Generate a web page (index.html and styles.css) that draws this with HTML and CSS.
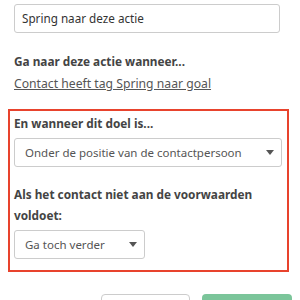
FILE: index.html
```html
<!DOCTYPE html>
<html lang="nl">
<head>
<meta charset="utf-8">
<link rel="stylesheet" href="styles.css">
</head>
<body>
<div class="page">
  <div class="name-input">Spring naar deze actie</div>
  <div class="section">
    <div class="label">Ga naar deze actie wanneer...</div>
    <a class="link" href="#">Contact heeft tag Spring naar goal</a>
  </div>
  <div class="highlight">
    <div class="label">En wanneer dit doel is...</div>
    <div class="select select-wide">
      <span>Onder de positie van de contactpersoon</span>
      <span class="caret"></span>
    </div>
    <div class="label label-second">Als het contact niet aan de voorwaarden voldoet:</div>
    <div class="select select-narrow">
      <span>Ga toch verder</span>
      <span class="caret"></span>
    </div>
  </div>
  <div class="actions">
    <div class="btn btn-cancel"></div>
    <div class="btn btn-save"></div>
  </div>
</div>
</body>
</html>
```

FILE: styles.css
```css
html, body {
  margin: 0;
  padding: 0;
  background: #fff;
}
body {
  font-family: "Noto Sans", "Open Sans", sans-serif;
  font-size: 12px;
  line-height: 21px;
  color: #444;
  overflow: hidden;
  height: 300px;
}
.page {
  padding: 4px 11px 0 8px;
}
.name-input {
  margin: 0 9px 0 6px;
  height: 29px;
  box-sizing: border-box;
  border: 1px solid #ccc;
  border-radius: 3px;
  padding: 0 7px;
  display: flex;
  align-items: center;
  color: #333;
  font-size: 11.7px;
}
.section {
  padding: 18px 6px 0;
  display: flex;
  flex-direction: column;
  gap: 1px;
}
.label {
  font-weight: 700;
  font-size: 11.8px;
  color: #444;
}
.link {
  font-size: 12.2px;
  color: #555;
  text-decoration: underline;
  align-self: flex-start;
}
.highlight {
  margin-top: 15px;
  border: 2px solid #e8432d;
  padding: 2px 5px 11px 4px;
  display: flex;
  flex-direction: column;
}
.select {
  height: 29px;
  box-sizing: border-box;
  border: 1px solid #ccc;
  border-radius: 3px;
  padding: 0 7px 0 10px;
  display: flex;
  align-items: center;
  justify-content: space-between;
  color: #555;
  font-size: 11.5px;
  margin-top: 4px;
}
.select-narrow {
  align-self: flex-start;
  width: 131px;
}
.caret {
  width: 0;
  height: 0;
  border-left: 4.5px solid transparent;
  border-right: 4.5px solid transparent;
  border-top: 5px solid #555;
}
.label-second {
  margin-top: 17px;
}
.actions {
  display: flex;
  justify-content: flex-end;
  gap: 12px;
  padding: 22px 0 0;
  margin-right: -3px;
}
.btn {
  height: 30px;
  border-radius: 4px;
  box-sizing: border-box;
}
.btn-cancel {
  width: 89px;
  border: 1px solid #ccc;
  background: #fff;
}
.btn-save {
  width: 90px;
  background: #7bc59a;
}
```
